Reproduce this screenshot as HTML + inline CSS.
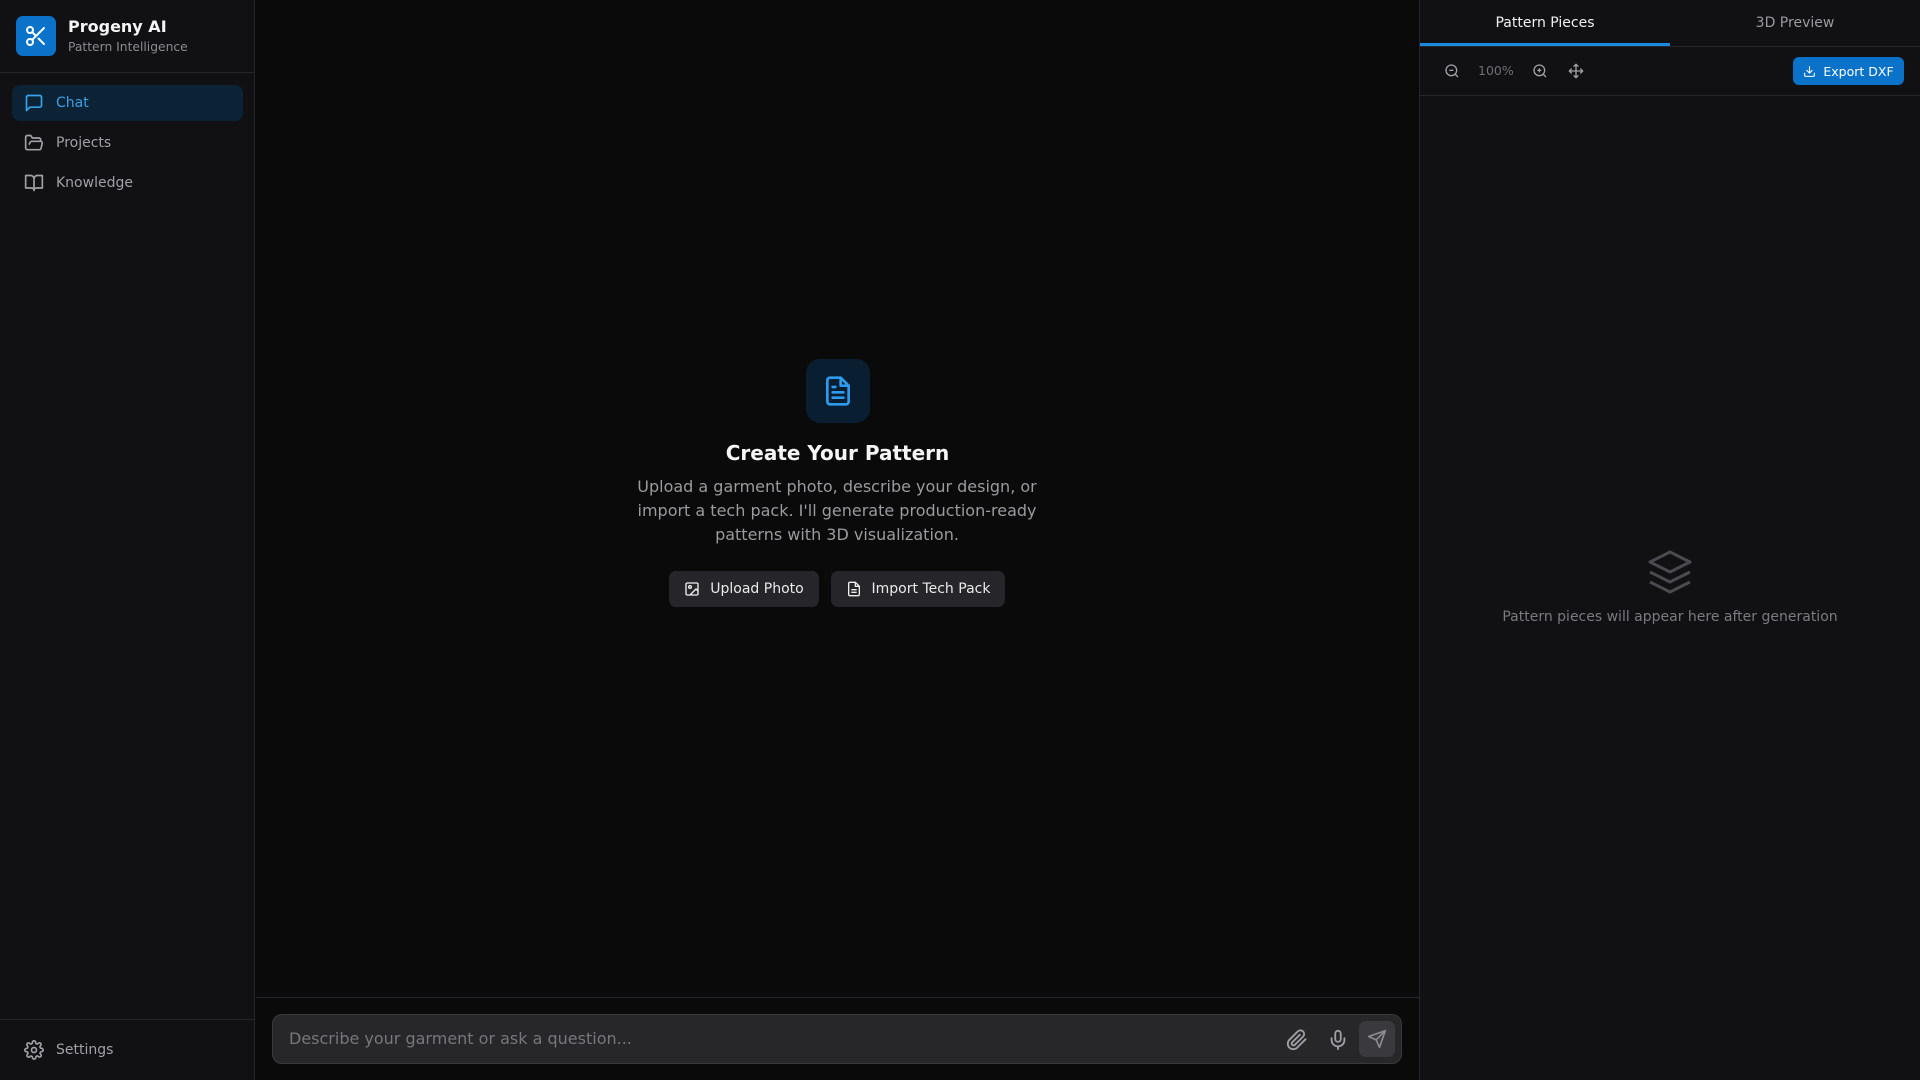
<!DOCTYPE html>
<html><head><meta charset="utf-8"><style>
*{box-sizing:border-box;margin:0;padding:0}
body{width:1920px;height:1080px;background:#0a0a0a;font-family:"DejaVu Sans","Liberation Sans",sans-serif;color:#e5e5e5;position:relative;overflow:hidden}
.side{position:absolute;left:0;top:0;width:255px;height:1080px;background:#111113;border-right:1px solid #26262a}
.logo{position:absolute;left:16px;top:16px;width:40px;height:40px;border-radius:7px;background:#0b72c9;display:flex;align-items:center;justify-content:center}
.t1{position:absolute;left:68px;top:17px;font-size:16px;font-weight:bold;color:#f5f5f5}
.t2{position:absolute;left:68px;top:40px;font-size:12.3px;color:#8a8a90}
.hl{position:absolute;left:0;top:72px;width:255px;border-top:1px solid #26262a}
.nav{position:absolute;left:12px;width:231px;height:36px;border-radius:8px;display:flex;align-items:center;padding-left:12px;font-size:14px;color:#a0a0a6}
.nav svg{margin-right:12px}
.nav.on{background:#0c2336;color:#3aa0e8}
.main{position:absolute;left:256px;top:0;width:1163px;height:1080px}
.right{position:absolute;left:1419px;top:0;width:501px;height:1080px;background:#111113;border-left:1px solid #26262a}
.btn{position:absolute;top:571px;height:36px;border-radius:7px;background:#26262a;display:flex;align-items:center;justify-content:center;font-size:14px;color:#eaeaea;gap:10px}
</style></head><body>
<div class="side">
<div class="logo"><svg width="24" height="24" viewBox="0 0 24 24" fill="none" stroke="#fff" stroke-width="2" stroke-linecap="round"><circle cx="6" cy="6" r="3"/><circle cx="6" cy="18" r="3"/><path d="M20 4L8.1 15.9M14.5 14.5L20 20M8.1 8.1L12 12"/></svg></div>
<div class="t1">Progeny AI</div><div class="t2">Pattern Intelligence</div>
<div class="hl"></div>
<div class="nav on" style="top:85px"><svg width="20" height="20" viewBox="0 0 24 24" fill="none" stroke="#3aa0e8" stroke-width="2" stroke-linejoin="round"><path d="M21 15a2 2 0 0 1-2 2H7l-4 4V5a2 2 0 0 1 2-2h14a2 2 0 0 1 2 2z"/></svg>Chat</div>
<div class="nav" style="top:125px"><svg width="20" height="20" viewBox="0 0 24 24" fill="none" stroke="#a0a0a6" stroke-width="2" stroke-linejoin="round"><path d="M6 14l1.5-3a2 2 0 0 1 1.8-1H20a2 2 0 0 1 1.9 2.5l-1.5 6A2 2 0 0 1 18.4 20H4a2 2 0 0 1-2-2V5a2 2 0 0 1 2-2h4l2 3h8a2 2 0 0 1 2 2v2"/></svg>Projects</div>
<div class="nav" style="top:165px"><svg width="20" height="20" viewBox="0 0 24 24" fill="none" stroke="#a0a0a6" stroke-width="2" stroke-linejoin="round"><path d="M2 3h6a4 4 0 0 1 4 4v14a3 3 0 0 0-3-3H2zM22 3h-6a4 4 0 0 0-4 4v14a3 3 0 0 1 3-3h7z"/></svg>Knowledge</div>
<div class="hl" style="top:1019px"></div>
<div class="nav" style="top:1032px"><svg width="20" height="20" viewBox="0 0 24 24" fill="none" stroke="#a0a0a6" stroke-width="2"><circle cx="12" cy="12" r="3"/><path d="M19.4 15a1.7 1.7 0 0 0 .3 1.8l.1.1a2 2 0 1 1-2.8 2.8l-.1-.1a1.7 1.7 0 0 0-1.8-.3 1.7 1.7 0 0 0-1 1.5V21a2 2 0 1 1-4 0v-.1a1.7 1.7 0 0 0-1.1-1.5 1.7 1.7 0 0 0-1.8.3l-.1.1a2 2 0 1 1-2.8-2.8l.1-.1a1.7 1.7 0 0 0 .3-1.8 1.7 1.7 0 0 0-1.5-1H3a2 2 0 1 1 0-4h.1a1.7 1.7 0 0 0 1.5-1.1 1.7 1.7 0 0 0-.3-1.8l-.1-.1a2 2 0 1 1 2.8-2.8l.1.1a1.7 1.7 0 0 0 1.8.3H9a1.7 1.7 0 0 0 1-1.5V3a2 2 0 1 1 4 0v.1a1.7 1.7 0 0 0 1 1.5 1.7 1.7 0 0 0 1.8-.3l.1-.1a2 2 0 1 1 2.8 2.8l-.1.1a1.7 1.7 0 0 0-.3 1.8V9a1.7 1.7 0 0 0 1.5 1H21a2 2 0 1 1 0 4h-.1a1.7 1.7 0 0 0-1.5 1z"/></svg>Settings</div>
</div>
<div class="main">
<div style="position:absolute;left:550px;top:359px;width:64px;height:64px;border-radius:14px;background:#0a1e31;display:flex;align-items:center;justify-content:center"><svg width="32" height="32" viewBox="0 0 24 24" fill="none" stroke="#2d9cef" stroke-width="2" stroke-linejoin="round" stroke-linecap="round"><path d="M14 2H6a2 2 0 0 0-2 2v16a2 2 0 0 0 2 2h12a2 2 0 0 0 2-2V8z"/><path d="M14 2v6h6M16 13H8M16 17H8M10 9H8"/></svg></div>
<div style="position:absolute;left:0;width:1163px;top:441px;text-align:center;font-size:20px;font-weight:bold;color:#f5f5f5">Create Your Pattern</div>
<div style="position:absolute;left:366px;width:430px;top:475px;text-align:center;font-size:16px;line-height:24px;color:#9a9aa0">Upload a garment photo, describe your design, or import a tech pack. I'll generate production-ready patterns with 3D visualization.</div>
<div class="btn" style="left:413px;width:150px"><svg width="16" height="16" viewBox="0 0 24 24" fill="none" stroke="#eee" stroke-width="2"><rect x="3" y="3" width="18" height="18" rx="2"/><circle cx="9" cy="9" r="2"/><path d="M21 15l-3-3-9 9"/></svg>Upload Photo</div>
<div class="btn" style="left:575px;width:174px"><svg width="16" height="16" viewBox="0 0 24 24" fill="none" stroke="#eee" stroke-width="2"><path d="M14 2H6a2 2 0 0 0-2 2v16a2 2 0 0 0 2 2h12a2 2 0 0 0 2-2V8z"/><path d="M14 2v6h6M16 13H8M16 17H8"/></svg>Import Tech Pack</div>
<div style="position:absolute;left:0;top:997px;width:1163px;border-top:1px solid #26262a"></div>
<div style="position:absolute;left:16px;top:1014px;width:1130px;height:50px;border-radius:10px;background:#27272a;border:1px solid #3a3a3e">
<div style="position:absolute;left:16px;top:14px;font-size:16px;color:#76767c">Describe your garment or ask a question...</div>
<svg style="position:absolute;left:1013px;top:14px" width="22" height="22" viewBox="0 0 24 24" fill="none" stroke="#a0a0a6" stroke-width="2" stroke-linecap="round"><path d="M21.4 11.1l-9.2 9.2a6 6 0 0 1-8.5-8.5l9.2-9.2a4 4 0 0 1 5.7 5.7l-9.2 9.2a2 2 0 0 1-2.8-2.8l8.5-8.5"/></svg>
<svg style="position:absolute;left:1054px;top:14px" width="22" height="22" viewBox="0 0 24 24" fill="none" stroke="#a0a0a6" stroke-width="2" stroke-linecap="round"><rect x="9" y="2" width="6" height="12" rx="3"/><path d="M19 10v2a7 7 0 0 1-14 0v-2M12 19v3"/></svg>
<div style="position:absolute;left:1086px;top:6px;width:36px;height:36px;border-radius:7px;background:#3a3a3e;display:flex;align-items:center;justify-content:center"><svg width="20" height="20" viewBox="0 0 24 24" fill="none" stroke="#8a8a90" stroke-width="2" stroke-linejoin="round"><path d="M22 2L11 13M22 2l-7 20-4-9-9-4z"/></svg></div>
</div>
</div>
<div class="right">
<div style="position:absolute;left:0;top:0;width:250px;height:46px;text-align:center;line-height:46px;font-size:14px;color:#f0f0f0;border-bottom:3px solid #1a8ae0">Pattern Pieces</div>
<div style="position:absolute;left:250px;top:0;width:250px;height:46px;text-align:center;line-height:46px;font-size:14px;color:#9a9aa0">3D Preview</div>
<div style="position:absolute;left:0;top:46px;width:500px;border-top:1px solid #26262a"></div>
<svg style="position:absolute;left:24px;top:63px" width="16" height="16" viewBox="0 0 24 24" fill="none" stroke="#a0a0a6" stroke-width="2"><circle cx="11" cy="11" r="8"/><path d="M21 21l-4.3-4.3M8 11h6"/></svg>
<div style="position:absolute;left:58px;top:63px;font-size:12.5px;color:#6e6e74">100%</div>
<svg style="position:absolute;left:112px;top:63px" width="16" height="16" viewBox="0 0 24 24" fill="none" stroke="#a0a0a6" stroke-width="2"><circle cx="11" cy="11" r="8"/><path d="M21 21l-4.3-4.3M8 11h6M11 8v6"/></svg>
<svg style="position:absolute;left:148px;top:63px" width="16" height="16" viewBox="0 0 24 24" fill="none" stroke="#a0a0a6" stroke-width="2" stroke-linecap="round"><path d="M5 9l-3 3 3 3M9 5l3-3 3 3M15 19l-3 3-3-3M19 9l3 3-3 3M2 12h20M12 2v20"/></svg>
<div style="position:absolute;left:373px;top:57px;width:111px;height:28px;border-radius:6px;background:#0b72c9;color:#fff;font-size:12.5px;display:flex;align-items:center;justify-content:center;gap:7px"><svg width="13" height="13" viewBox="0 0 24 24" fill="none" stroke="#fff" stroke-width="2" stroke-linecap="round"><path d="M21 15v4a2 2 0 0 1-2 2H5a2 2 0 0 1-2-2v-4M7 10l5 5 5-5M12 15V3"/></svg>Export DXF</div>
<div style="position:absolute;left:0;top:95px;width:500px;border-top:1px solid #26262a"></div>
<svg style="position:absolute;left:226px;top:548px" width="48" height="48" viewBox="0 0 24 24" fill="none" stroke="#4a4a50" stroke-width="1.5" stroke-linejoin="round"><path d="M12 2L2 7l10 5 10-5z"/><path d="M2 12l10 5 10-5M2 17l10 5 10-5"/></svg>
<div style="position:absolute;left:0;width:500px;top:609px;text-align:center;font-size:14px;color:#7a7a80">Pattern pieces will appear here after generation</div>
</div>
</body></html>
